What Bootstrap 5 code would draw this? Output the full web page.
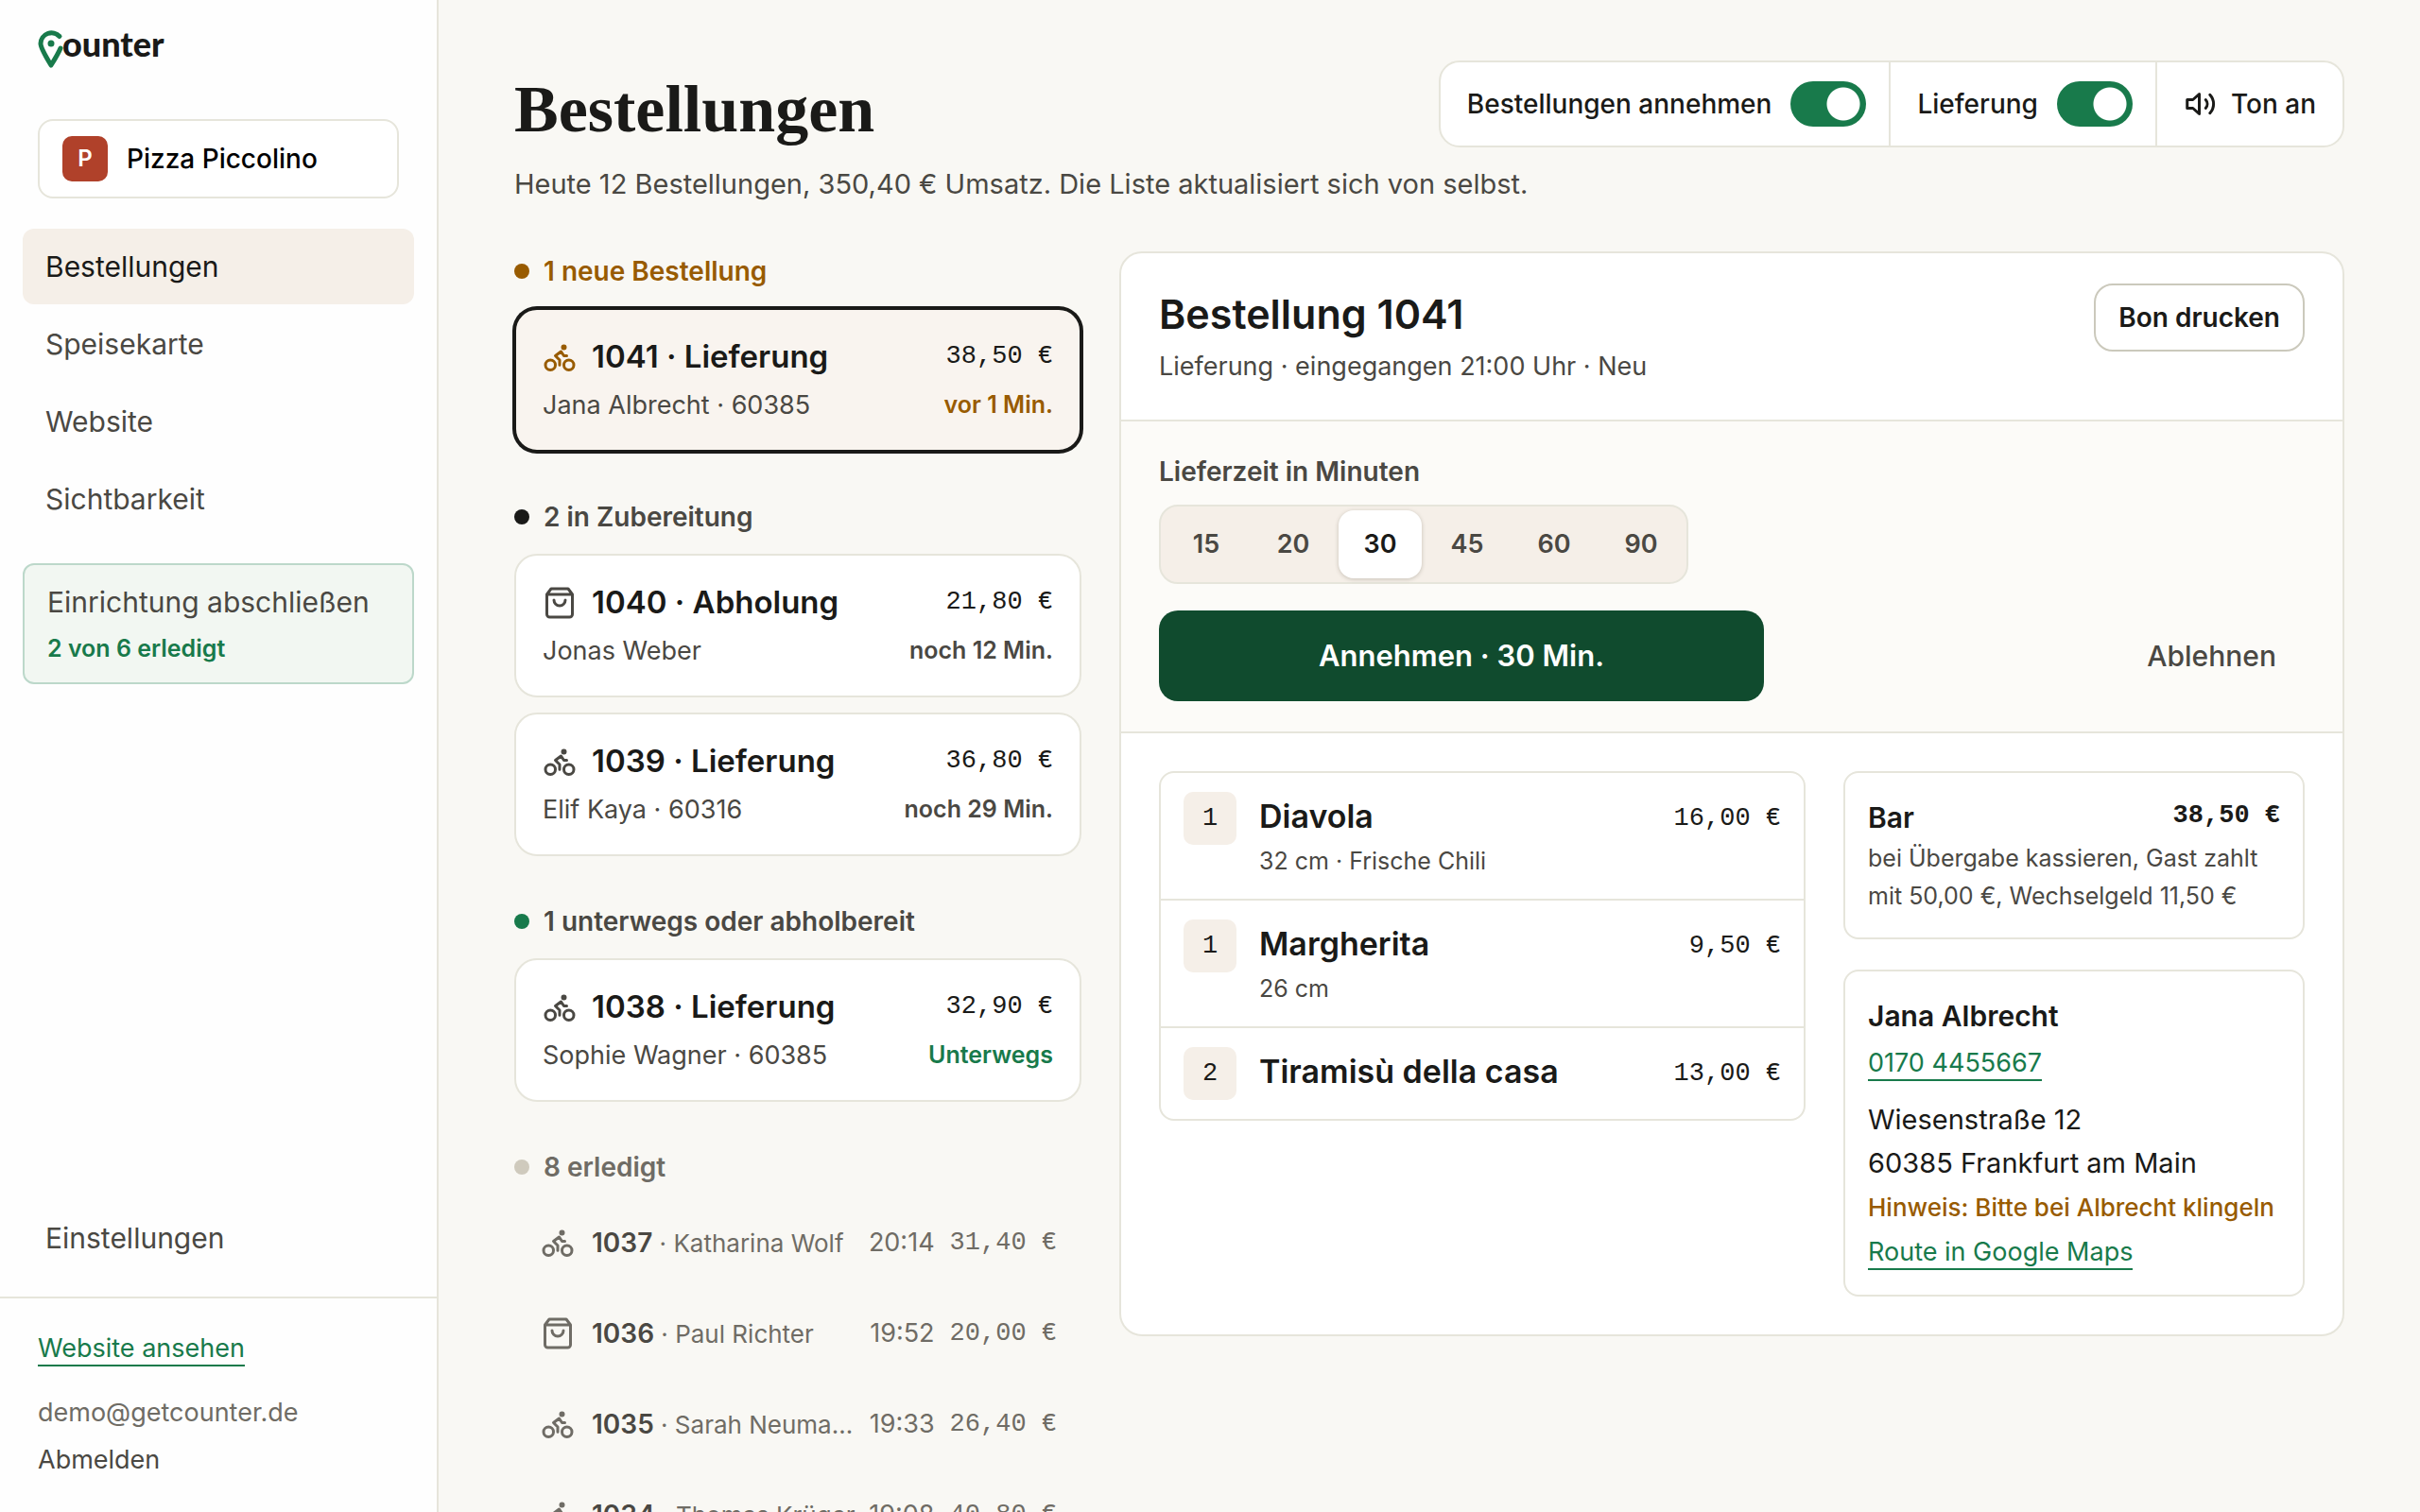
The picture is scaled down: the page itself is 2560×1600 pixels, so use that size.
<!DOCTYPE html>
<html lang="de">
<head>
<meta charset="utf-8">
<meta name="viewport" content="width=device-width, initial-scale=1">
<title>Bestellungen · Counter</title>
<link href="https://cdn.jsdelivr.net/npm/bootstrap@5.3.0/dist/css/bootstrap.min.css" rel="stylesheet">
<style>
:root{--ink:#1a1a18;--soft:#4a4843;--mute:#6f6c65;--line:#e6e5db;--sand:#f5efe8;--green:#187a4b;--deep:#104b2e;--amber:#985b00;--paper:#f9f8f4}
body{font-family:Inter,"Liberation Sans",sans-serif;font-size:27px;line-height:42px;color:var(--ink);background:var(--paper)}
a{text-decoration:none;color:inherit}
.t25{font-size:25px;line-height:40px}
.t26{font-size:26px;line-height:40px}
.t28{font-size:28px;line-height:42px}
.t29{font-size:29px;line-height:46px}
.t30{font-size:30px;line-height:46px}
.t33{font-size:33px;line-height:51px}
.t34{font-size:34px;line-height:51px}
.soft{color:var(--soft)}.mute{color:var(--mute)}.amber{color:var(--amber)}.green{color:var(--green)}
.w5{font-weight:500}.w6{font-weight:600}
.mono{font-family:"Liberation Mono",monospace;font-size:27px;white-space:nowrap}
.ico{width:36px;height:36px;flex:none;fill:none;stroke:currentColor;stroke-width:2;stroke-linecap:round;stroke-linejoin:round}
.ulink{color:var(--green);border-bottom:2px solid var(--green);line-height:34px;display:inline-block}

.side{width:464px;flex:none;background:#fefefe;border-right:2px solid var(--line)}
.brand{margin:22px 40px 44px}
.brand-word{font-family:Lato,sans-serif;font-weight:900}
.shop{margin:0 40px;height:84px;border:2px solid var(--line);border-radius:16px;padding:0 24px;gap:20px}
.shop-mark{width:48px;height:48px;border-radius:10px;background:#b0412a;color:#fff;font-size:24px}
.side-nav{padding:0 24px;gap:2px}
.side-nav .nav-link{height:80px;padding:0 24px;border-radius:12px;font-size:30px;color:var(--soft)}
.side-nav .nav-link.active{background:var(--sand);color:var(--ink)}
.main-nav{margin-top:32px}
.setup{margin:28px 24px 0;padding:16px 24px;border:2px solid #bcd8ca;border-radius:12px;background:#f2f7f2}
.setup-state{margin-top:6px}
.side-foot{border-top:2px solid var(--line);padding:32px 40px 34px;margin-top:22px}
.side-mail{margin-top:26px}

.stage{padding:64px 80px 0;overflow-y:auto;scrollbar-width:none}
.page-title{font:bold 70px/92px "Liberation Serif",serif;padding-top:6px}
.lead-in{font-size:29px;line-height:42px;color:var(--soft);margin-top:12px}
.panel{background:#fff;border:2px solid var(--line);border-radius:24px}
.tools{flex:none;white-space:nowrap;border-radius:22px}
.tool{padding:0 24px 0 28px;height:88px;gap:20px}
.tool+.tool{border-left:2px solid var(--line)}
.form-check-input.sw{width:80px;height:48px;flex:none;margin:0;border:0;border-radius:24px;background:radial-gradient(circle at calc(100% - 24px) 50%,#fff 17px,transparent 18px) var(--green)}
.tool-btn{border:0;background:none;padding:0 28px;gap:14px;color:inherit}

.cols{margin-top:50px;gap:40px}
.list-col{width:600px;flex:none;gap:48px}
.dot{width:16px;height:16px;border-radius:50%;background:currentColor}
.dot-done{background:#cfcabd}
.group-head{gap:15px;margin:0 0 18px;font-size:28px;line-height:42px;font-weight:600}
.order{height:152px;border-radius:24px;padding:24px 28px}
.order .t33{gap:16px}
.order-sub{margin-top:5px}
.order.sel{background:#f9f4ef;border-color:var(--ink);box-shadow:0 0 0 2px var(--ink)}
.done-list{margin-top:-7px}
.done-row{height:96px;padding:0 26px 0 28px}
.done-row .ico{margin-right:18px}
.done-row .who{font-size:26px}
.done-row .clock{margin-left:10px}
.done-row b{font-size:28px;font-weight:600}

.detail-head{padding:32px 40px}
.detail-title{font-size:43px;line-height:64px;font-weight:600}
.detail-sub{line-height:48px}
.act{background:#fcfbf8;border-top:2px solid var(--line);border-bottom:2px solid var(--line);padding:32px 40px}
.seg{background:var(--sand);border:2px solid var(--line);border-radius:20px;padding:4px;gap:4px;width:560px;margin:14px 0 28px}
.seg .btn{flex:1;height:72px;line-height:72px;padding:0;border:0;border-radius:16px;font-size:27px;font-weight:600;color:var(--soft)}
.seg .btn-check:checked+.btn{background:#fff;color:var(--ink);box-shadow:0 1px 4px rgba(60,50,30,.25)}
.btn-go{width:640px;height:96px;border-radius:20px;background:var(--deep);color:#fff;font-size:31px;font-weight:600}
.btn-no{border:0;padding:0 30px;font-size:30px;font-weight:500;color:var(--soft)}
.btn-bon{height:72px;padding:0 24px;border:2px solid #cbc9bc;border-radius:20px;font-size:28px;font-weight:600;color:var(--ink);background:#fff}
.body-cols{padding:40px;gap:40px}
.box{border:2px solid var(--line);border-radius:16px}
.item{padding:20px 24px;gap:24px}
.item+.item{border-top:2px solid var(--line)}
.item .mono{line-height:56px}
.item-note{margin-top:2px}
.item .qty{width:56px;height:56px;border-radius:10px;background:var(--sand);text-align:center}
.side-col{width:488px;flex:none;gap:32px}
.contact .ulink{margin-top:10px}
.hint{margin-top:4px}
</style>
</head>
<body class="vh-100 overflow-hidden d-flex">
<svg class="d-none" aria-hidden="true">
  <symbol id="bike" viewBox="0 0 24 24"><circle cx="5.5" cy="17.5" r="3.5"/><circle cx="18.5" cy="17.5" r="3.5"/><circle cx="15" cy="5" r="1" fill="currentColor"/><path d="M12 17.5V14l-3-3 4-3 2 3h2"/></symbol>
  <symbol id="bag" viewBox="0 0 24 24"><path d="M6 2 3 6v14a2 2 0 0 0 2 2h14a2 2 0 0 0 2-2V6l-3-4ZM3 6h18M16 10a4 4 0 0 1-8 0"/></symbol>
</svg>

<aside class="side d-flex flex-column vh-100">
  <a href="#" aria-label="Counter" class="brand d-block">
    <svg class="d-block" width="150" height="60" viewBox="0 -8 150 60">
      <path d="M23 8.500A11.500 11.500 0 0 0 3 16c0 5 5 13 11 23 5-8 8-13 10-18" fill="none" stroke="#187a4b" stroke-width="5" stroke-linecap="round" stroke-linejoin="round"/>
      <circle cx="14" cy="16" r="3.500" fill="#187a4b"/>
      <text x="26" y="30" class="brand-word" font-size="36" fill="#1a1a18">ounter</text>
    </svg>
  </a>
  <button type="button" class="shop d-flex align-items-center bg-white">
    <span class="shop-mark w6 d-flex align-items-center justify-content-center">P</span>
    <span class="t28 w5">Pizza Piccolino</span>
  </button>
  <nav class="side-nav main-nav nav flex-column flex-nowrap">
    <a href="#" class="nav-link active d-flex align-items-center" aria-current="page">Bestellungen</a>
    <a href="#" class="nav-link d-flex align-items-center">Speisekarte</a>
    <a href="#" class="nav-link d-flex align-items-center">Website</a>
    <a href="#" class="nav-link d-flex align-items-center">Sichtbarkeit</a>
  </nav>
  <a href="#" class="setup d-block">
    <span class="t30 soft d-block">Einrichtung abschließen</span>
    <span class="setup-state t25 w6 green d-block">2 von 6 erledigt</span>
  </a>
  <nav class="side-nav nav flex-column mt-auto">
    <a href="#" class="nav-link d-flex align-items-center">Einstellungen</a>
  </nav>
  <div class="side-foot">
    <a href="#" class="ulink">Website ansehen</a>
    <div class="side-mail mute">demo@getcounter.de</div>
    <a href="#" class="soft d-block mt-2">Abmelden</a>
  </div>
</aside>

<main class="stage flex-grow-1 vh-100">
  <header>
    <div class="d-flex justify-content-between align-items-start">
      <h1 class="page-title m-0">Bestellungen</h1>
      <div class="panel tools d-flex t28 w5">
        <div class="tool d-flex align-items-center form-switch">
          <label for="sw1">Bestellungen annehmen</label>
          <input class="form-check-input sw" type="checkbox" role="switch" id="sw1" checked>
        </div>
        <div class="tool d-flex align-items-center form-switch">
          <label for="sw2">Lieferung</label>
          <input class="form-check-input sw" type="checkbox" role="switch" id="sw2" checked>
        </div>
        <button type="button" class="tool tool-btn w5 d-flex align-items-center">
          <svg class="ico" viewBox="0 0 24 24"><path d="M11 5 6.500 9H2.500v6h4L11 19ZM15.500 9a4.500 4.500 0 0 1 0 6M18.500 5.500a9.500 9.500 0 0 1 0 13"/></svg>
          <span>Ton an</span>
        </button>
      </div>
    </div>
    <p class="lead-in mb-0">Heute 12 Bestellungen, 350,40 € Umsatz. Die Liste aktualisiert sich von selbst.</p>
  </header>

  <div class="cols d-flex align-items-start">
    <div class="list-col d-flex flex-column">
      <section>
        <h2 class="group-head d-flex align-items-center amber"><span class="dot"></span>1 neue Bestellung</h2>
        <a href="#" class="order sel panel d-block">
          <span class="d-flex align-items-center t33"><svg class="ico amber"><use href="#bike"/></svg><span class="w6 me-auto">1041 · Lieferung</span><span class="mono">38,50 €</span></span>
          <span class="order-sub d-flex justify-content-between"><span class="soft">Jana Albrecht · 60385</span><span class="t25 w6 amber">vor 1 Min.</span></span>
        </a>
      </section>
      <section>
        <h2 class="group-head d-flex align-items-center"><span class="dot"></span><span class="soft">2 in Zubereitung</span></h2>
        <div class="d-flex flex-column gap-3">
          <a href="#" class="order panel d-block">
            <span class="d-flex align-items-center t33"><svg class="ico soft"><use href="#bag"/></svg><span class="w6 me-auto">1040 · Abholung</span><span class="mono">21,80 €</span></span>
            <span class="order-sub d-flex justify-content-between"><span class="soft">Jonas Weber</span><span class="t25 w6 soft">noch 12 Min.</span></span>
          </a>
          <a href="#" class="order panel d-block">
            <span class="d-flex align-items-center t33"><svg class="ico soft"><use href="#bike"/></svg><span class="w6 me-auto">1039 · Lieferung</span><span class="mono">36,80 €</span></span>
            <span class="order-sub d-flex justify-content-between"><span class="soft">Elif Kaya · 60316</span><span class="t25 w6 soft">noch 29 Min.</span></span>
          </a>
        </div>
      </section>
      <section>
        <h2 class="group-head d-flex align-items-center"><span class="dot green"></span><span class="soft">1 unterwegs oder abholbereit</span></h2>
        <a href="#" class="order panel d-block">
          <span class="d-flex align-items-center t33"><svg class="ico soft"><use href="#bike"/></svg><span class="w6 me-auto">1038 · Lieferung</span><span class="mono">32,90 €</span></span>
          <span class="order-sub d-flex justify-content-between"><span class="soft">Sophie Wagner · 60385</span><span class="t25 w6 green">Unterwegs</span></span>
        </a>
      </section>
      <section class="mute">
        <h2 class="group-head d-flex align-items-center"><span class="dot dot-done"></span>8 erledigt</h2>
        <div class="done-list">
          <a href="#" class="done-row d-flex align-items-center"><svg class="ico"><use href="#bike"/></svg><span class="who text-truncate me-auto"><b class="soft">1037</b> · Katharina Wolf</span><span class="clock">20:14</span><span class="mono ms-3">31,40 €</span></a>
          <a href="#" class="done-row d-flex align-items-center"><svg class="ico"><use href="#bag"/></svg><span class="who text-truncate me-auto"><b class="soft">1036</b> · Paul Richter</span><span class="clock">19:52</span><span class="mono ms-3">20,00 €</span></a>
          <a href="#" class="done-row d-flex align-items-center"><svg class="ico"><use href="#bike"/></svg><span class="who text-truncate me-auto"><b class="soft">1035</b> · Sarah Neumann</span><span class="clock">19:33</span><span class="mono ms-3">26,40 €</span></a>
          <a href="#" class="done-row d-flex align-items-center"><svg class="ico"><use href="#bike"/></svg><span class="who text-truncate me-auto"><b class="soft">1034</b> · Thomas Krüger</span><span class="clock">19:08</span><span class="mono ms-3">40,80 €</span></a>
        </div>
      </section>
    </div>

    <article class="panel flex-grow-1">
      <div class="detail-head d-flex justify-content-between align-items-start">
        <div>
          <h2 class="detail-title m-0">Bestellung 1041</h2>
          <div class="detail-sub soft">Lieferung · eingegangen 21:00 Uhr · Neu</div>
        </div>
        <button type="button" class="btn btn-bon">Bon drucken</button>
      </div>
      <div class="act">
        <div class="t28 w6 soft" id="lz">Lieferzeit in Minuten</div>
        <div class="seg d-flex" role="radiogroup" aria-labelledby="lz">
          <input type="radio" class="btn-check" name="t" id="t15"><label class="btn" for="t15">15</label>
          <input type="radio" class="btn-check" name="t" id="t20"><label class="btn" for="t20">20</label>
          <input type="radio" class="btn-check" name="t" id="t30" checked><label class="btn" for="t30">30</label>
          <input type="radio" class="btn-check" name="t" id="t45"><label class="btn" for="t45">45</label>
          <input type="radio" class="btn-check" name="t" id="t60"><label class="btn" for="t60">60</label>
          <input type="radio" class="btn-check" name="t" id="t90"><label class="btn" for="t90">90</label>
        </div>
        <div class="d-flex justify-content-between align-items-center">
          <button type="button" class="btn btn-go">Annehmen · 30 Min.</button>
          <button type="button" class="btn btn-no">Ablehnen</button>
        </div>
      </div>
      <div class="body-cols d-flex align-items-start">
        <div class="box flex-grow-1">
          <div class="item d-flex"><span class="qty mono">1</span><div class="me-auto"><div class="t34 w6">Diavola</div><div class="item-note t25 soft">32 cm · Frische Chili</div></div><span class="mono">16,00 €</span></div>
          <div class="item d-flex"><span class="qty mono">1</span><div class="me-auto"><div class="t34 w6">Margherita</div><div class="item-note t25 soft">26 cm</div></div><span class="mono">9,50 €</span></div>
          <div class="item d-flex"><span class="qty mono">2</span><div class="me-auto"><div class="t34 w6">Tiramisù della casa</div></div><span class="mono">13,00 €</span></div>
        </div>
        <div class="side-col d-flex flex-column">
          <div class="box p-4">
            <div class="d-flex justify-content-between"><span class="t30 w6">Bar</span><b class="mono">38,50 €</b></div>
            <div class="t25 soft">bei Übergabe kassieren, Gast zahlt mit 50,00 €, Wechselgeld 11,50 €</div>
          </div>
          <div class="box p-4 contact">
            <div class="t30 w6">Jana Albrecht</div>
            <a href="#" class="ulink">0170 4455667</a>
            <address class="t29 m-0 mt-3">Wiesenstraße 12<br>60385 Frankfurt am Main</address>
            <div class="hint t26 w5 amber">Hinweis: Bitte bei Albrecht klingeln</div>
            <a href="#" class="ulink">Route in Google Maps</a>
          </div>
        </div>
      </div>
    </article>
  </div>
</main>
<script src="https://cdn.jsdelivr.net/npm/bootstrap@5.3.0/dist/js/bootstrap.bundle.min.js"></script>
</body>
</html>
